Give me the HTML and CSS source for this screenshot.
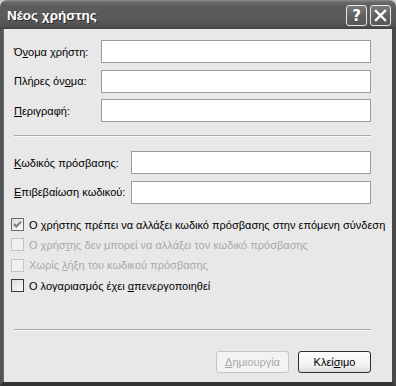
FILE: index.html
```html
<!DOCTYPE html>
<html lang="el">
<head>
    <meta charset="UTF-8">
    <title>Νέος χρήστης</title>
    <link rel="stylesheet" href="styles.css">
</head>
<body>

    <div class="window">
        <div class="titlebar">
            <span class="title">Νέος χρήστης</span>
            <div class="caption-buttons">
                <span class="caption-btn help">?</span>
                <span class="caption-btn close">
                    <svg width="13" height="13" viewBox="0 0 13 13">
                        <path d="M2 2 L11 11 M11 2 L2 11" stroke="#fff" stroke-width="2.4" stroke-linecap="square"/>
                    </svg>
                </span>
            </div>
        </div>

        <div class="client">
            <div class="form-group">
                <div class="form-row">
                    <label>Ό<u>ν</u>ομα χρήστη:</label>
                    <input type="text" class="field">
                </div>
                <div class="form-row">
                    <label>Πλήρες όν<u>ο</u>μα:</label>
                    <input type="text" class="field">
                </div>
                <div class="form-row">
                    <label><u>Π</u>εριγραφή:</label>
                    <input type="text" class="field">
                </div>
            </div>

            <div class="separator"></div>

            <div class="form-group wide">
                <div class="form-row">
                    <label><u>Κ</u>ωδικός πρόσβασης:</label>
                    <input type="password" class="field">
                </div>
                <div class="form-row">
                    <label><u>Ε</u>πιβεβαίωση κωδικού:</label>
                    <input type="password" class="field">
                </div>
            </div>

            <!-- Options -->
            <div class="options">
                <div class="check-row">
                    <span class="box checked">
                        <svg width="11" height="11" viewBox="0 0 11 11">
                            <path d="M2 5 L4.3 7.5 L9 2.6" fill="none" stroke="#7c7c7c" stroke-width="2"/>
                        </svg>
                    </span>
                    <span>Ο <u>χ</u>ρήστης πρέπει να αλλάξει κωδικό πρόσβασης στην επόμενη σύνδεση</span>
                </div>
                <div class="check-row disabled">
                    <span class="box"></span>
                    <span>Ο χρήσ<u>τ</u>ης δεν μπορεί να αλλάξει τον κωδικό πρόσβασης</span>
                </div>
                <div class="check-row disabled">
                    <span class="box"></span>
                    <span>Χωρίς <u>λ</u>ήξη του κωδικού πρόσβασης</span>
                </div>
                <div class="check-row">
                    <span class="box"></span>
                    <span>Ο λογαριασμός έχει <u>α</u>πενεργοποιηθεί</span>
                </div>
            </div>

            <div class="separator bottom"></div>

            <div class="button-bar">
                <button class="btn" disabled><u>Δ</u>ημιουργία</button>
                <button class="btn">Κλεί<u>σ</u>ιμο</button>
            </div>
        </div>
    </div>

</body>
</html>
```

FILE: styles.css
```css
body {
    margin: 0;
    background: #cfcfcf;
    font-family: 'Liberation Sans', Arial, sans-serif;
    font-size: 11px;
    color: #000;
}

.window {
    width: 396px;
    height: 386px;
    display: flex;
    flex-direction: column;
    box-sizing: border-box;
}

/* Title bar */
.titlebar {
    height: 29px;
    display: flex;
    align-items: center;
    justify-content: space-between;
    padding: 0 5px 0 7px;
    border-radius: 7px 7px 0 0;
    background: linear-gradient(to bottom, #8e8e8e 0px, #6a6a6a 2px, #5c5c5c 6px, #5a5a5a 20px, #4e4e4e 27px, #3e3e3e 29px);
    box-sizing: border-box;
}

.title {
    color: #fff;
    font-family: 'Liberation Sans', Arial, sans-serif;
    font-weight: bold;
    font-size: 13.5px;
    text-shadow: 1px 1px 0 #2a2a2a;
    margin-top: 1px;
}

.caption-buttons {
    display: flex;
    gap: 3px;
    margin-top: 2px;
}

.caption-btn {
    width: 21px;
    height: 21px;
    box-sizing: border-box;
    border: 1px solid #e8e8e8;
    border-radius: 3px;
    background: linear-gradient(to bottom, #7a7a7a, #5e5e5e 60%, #575757);
    display: flex;
    align-items: center;
    justify-content: center;
}

.caption-btn.help {
    color: #fff;
    font-family: 'DejaVu Sans', sans-serif;
    font-weight: bold;
    font-size: 15px;
}

/* Client area */
.client {
    flex: 1;
    background: #e8e8e8;
    border-left: 3px solid #555;
    border-right: 4px solid #4a4a4a;
    border-bottom: 4px solid #333;
    padding: 11px 21px 0 11px;
    display: flex;
    flex-direction: column;
    box-shadow: inset 1px 0 0 #6a6a6a;
}

.form-group {
    display: flex;
    flex-direction: column;
    gap: 6.5px;
}

.form-row {
    display: flex;
    align-items: center;
}

.form-row label {
    width: 87px;
    flex: none;
}

.wide .form-row label {
    width: 117px;
}

.field {
    flex: 1;
    height: 23px;
    box-sizing: border-box;
    margin: 0;
    border: 1px solid #9b9b9b;
    background: #fff;
    padding: 0 3px;
    font: inherit;
    outline: none;
}

.separator {
    height: 1px;
    background: #a8a8a8;
    border-bottom: 1px solid #fafafa;
    margin: 13px 0 14px;
}

/* Checkboxes */
.options {
    margin-top: 11px;
    margin-left: -3px;
    margin-right: -30px;
}

.check-row {
    height: 20.3px;
    display: flex;
    align-items: center;
    white-space: nowrap;
}

.box {
    width: 13px;
    height: 13px;
    box-sizing: border-box;
    border: 1px solid #3a3a3a;
    background: linear-gradient(135deg, #dcdcdc, #fbfbfb);
    margin-right: 5px;
    display: flex;
    align-items: center;
    justify-content: center;
    flex: none;
}

.box.checked {
    border-color: #6a6a6a;
}

.check-row.disabled {
    color: #a9a9a9;
}

.check-row.disabled .box {
    border-color: #c4c4c4;
    background: #f0f0f0;
}

.separator.bottom {
    margin: 33px 0 0;
}

/* Buttons */
.button-bar {
    display: flex;
    justify-content: flex-end;
    gap: 9px;
    margin-top: 20px;
}

.btn {
    width: 73px;
    height: 22px;
    box-sizing: border-box;
    border: 1px solid #2e2e2e;
    border-radius: 3px;
    background: linear-gradient(to bottom, #fdfdfd, #f0f0f0 70%, #dadada);
    font: inherit;
    color: #000;
    padding: 0;
}

.btn:disabled {
    border-color: #c6c6c6;
    background: #f3f3f3;
    color: #a9a9a9;
}
```
